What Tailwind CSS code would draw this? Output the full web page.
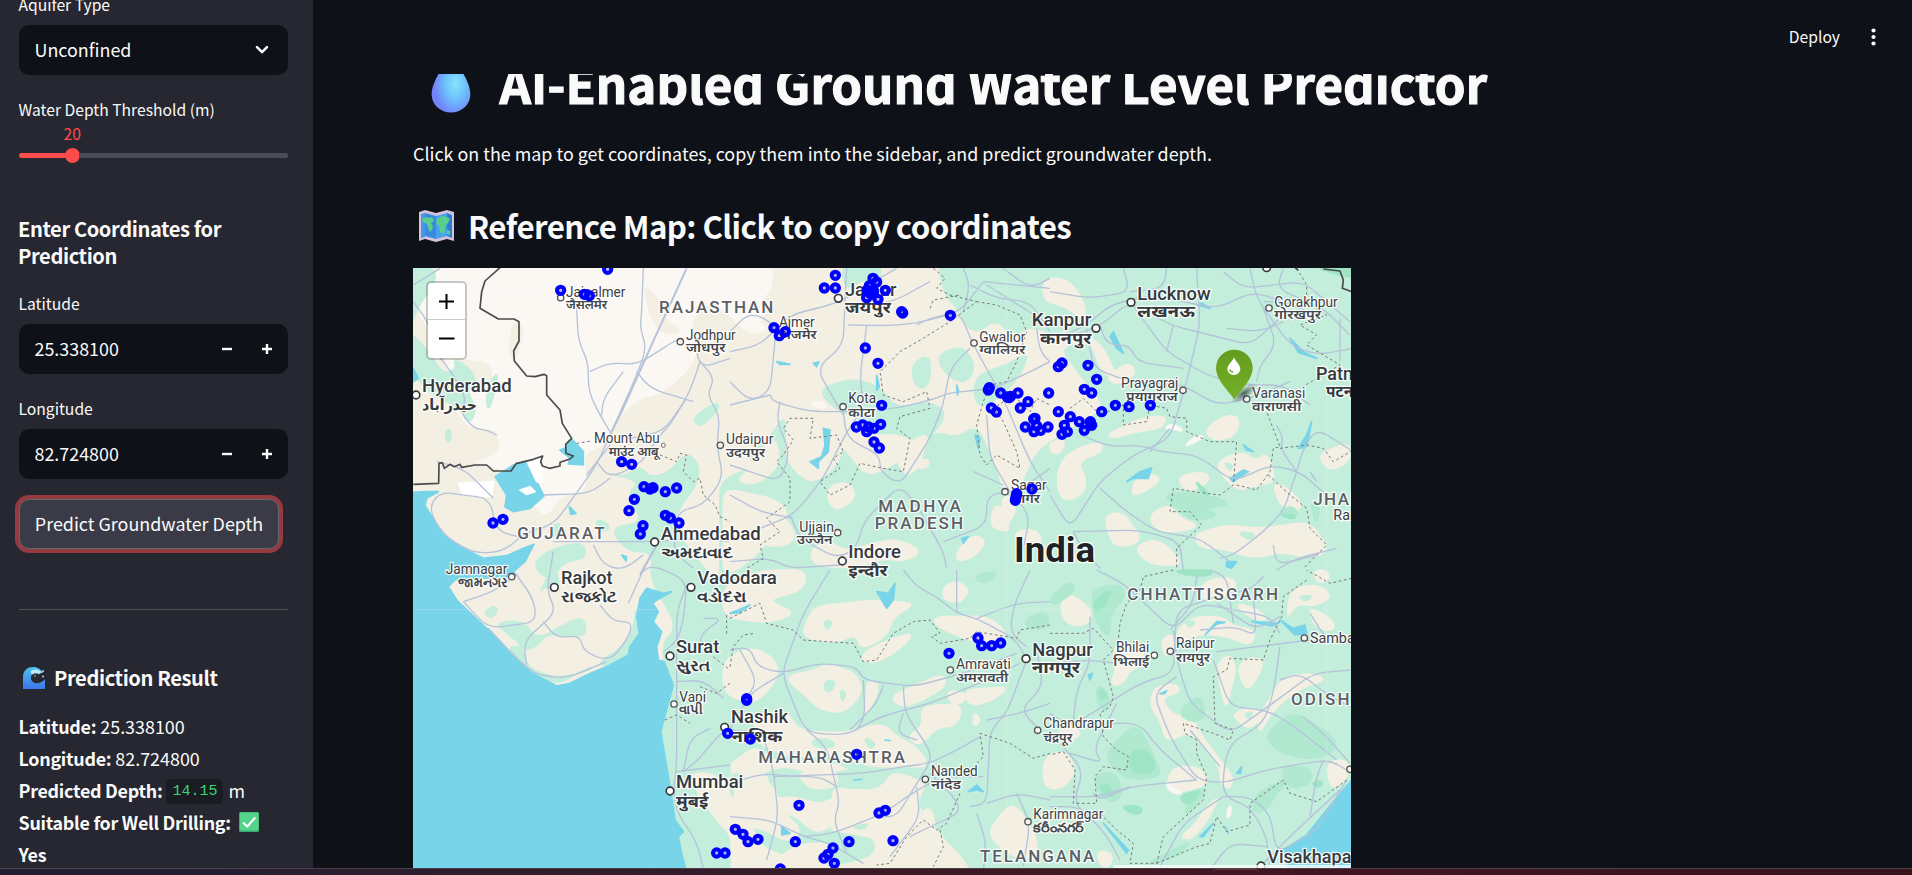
<!DOCTYPE html>
<html lang="en">
<head>
<meta charset="utf-8">
<title>AI-Enabled Ground Water Level Predictor</title>
<script src="https://cdn.jsdelivr.net/npm/@tailwindcss/browser@4"></script>
</head>
<body class="flex h-[875px] w-[1912px] flex-col overflow-hidden bg-[#0e1117] font-['Noto_Sans_CJK_SC','Source_Sans_3',sans-serif] text-[#fafafa]">
<div class="flex h-[868px] overflow-hidden">
  <aside class="h-[868px] w-[313px] shrink-0 overflow-hidden bg-[#262730] pl-[19px] pr-[25px]">
    <div class="-ml-[0.5px] h-[25px] text-[15.67px] leading-[10px] whitespace-nowrap">Aquifer Type</div>
    <div class="flex h-[50px] items-center justify-between rounded-[10px] bg-[#0e1117] pl-[15.5px] pr-[19px] text-[17.9px] leading-[30px]">
      <span class="mb-[2px]">Unconfined</span>
      <svg width="14" height="10" viewBox="0 0 14 10" fill="none" stroke="#fafafa" stroke-width="2.5" stroke-linecap="round" stroke-linejoin="round"><path d="M2 2.2 7 7.2 12 2.2"/></svg>
    </div>
    <div class="mt-[23px] -ml-[0.5px] h-6 text-[15.67px] leading-6 whitespace-nowrap">Water Depth Threshold (m)</div>
    <div class="h-[23px] pl-[44.5px] text-[15.67px] leading-[24px] text-[#ff4b4b]">20</div>
    <div class="mt-[3px] flex h-[15px] items-center">
      <div class="h-[5px] w-[48px] rounded-l-full bg-[#ff4b4b]"></div>
      <div class="-ml-[2px] size-[15px] rounded-full bg-[#ff4b4b]"></div>
      <div class="-ml-px h-[5px] flex-1 rounded-r-full bg-[#4b4c56]"></div>
    </div>
    <h3 class="mt-[52px] -ml-px h-[54px] text-[20.1px] leading-[27px] font-semibold tracking-[-0.4px]">Enter Coordinates for<br>Prediction</h3>
    <div class="mt-[23px] -ml-[0.5px] h-6 text-[15.67px] leading-6">Latitude</div>
    <div class="mt-[8px] flex h-[50px] items-center rounded-[10px] bg-[#0e1117] pl-[15.5px] pr-4 text-[17.9px] leading-[30px]">
      <span class="mb-[2px] flex-1">25.338100</span>
      <svg class="mr-[30px]" width="10" height="10" viewBox="0 0 10 10"><path d="M0 5H10" stroke="#fafafa" stroke-width="2.4"/></svg>
      <svg width="10" height="10" viewBox="0 0 10 10"><path d="M0 5H10M5 0V10" stroke="#fafafa" stroke-width="2.4"/></svg>
    </div>
    <div class="mt-[23px] -ml-[0.5px] h-6 text-[15.67px] leading-6">Longitude</div>
    <div class="mt-[8px] flex h-[50px] items-center rounded-[10px] bg-[#0e1117] pl-[15.5px] pr-4 text-[17.9px] leading-[30px]">
      <span class="mb-[2px] flex-1">82.724800</span>
      <svg class="mr-[30px]" width="10" height="10" viewBox="0 0 10 10"><path d="M0 5H10" stroke="#fafafa" stroke-width="2.4"/></svg>
      <svg width="10" height="10" viewBox="0 0 10 10"><path d="M0 5H10M5 0V10" stroke="#fafafa" stroke-width="2.4"/></svg>
    </div>
    <button class="mt-5 flex h-[50px] w-[260px] items-center justify-center rounded-[10px] border border-[#65666e] bg-[#3b3b47] pb-[2px] text-[17.9px] whitespace-nowrap ring-4 ring-[#943a40]">Predict Groundwater Depth</button>
    <div class="mt-[60px] h-px bg-[#4e4f57]"></div>
    <h3 class="mt-[54px] flex h-[27px] items-center text-[20.1px] leading-[27px] font-semibold tracking-[-0.4px] whitespace-nowrap">
      <svg class="mr-[9px] ml-1 shrink-0" width="22" height="22" viewBox="0 0 22 22">
        <defs><linearGradient id="wv" x1="0" y1="0" x2="0" y2="1"><stop offset="0" stop-color="#4fc3f0"/><stop offset="1" stop-color="#3d76ea"/></linearGradient></defs>
        <path d="M0 22V10C0 3 5 0 10 0c4 0 8 2 9 5l-2 2c-4-3-9-1-9 4 0 4 4 6 8 5 3-.7 5-2.500 6-4v10z" fill="url(#wv)"/>
        <path d="M8 4c2-2 7-2 9 0l3 1-1 1-2-.5-1 2-2-1.500-1 1-1-1-2 1.500-2-1z" fill="#b9ecf7"/><g fill="#b9ecf7"><circle cx="20" cy="4" r=".9"/><circle cx="20" cy="9.500" r=".9"/><circle cx="12" cy="9" r=".7"/></g>
      </svg>Prediction Result</h3>
    <div class="mt-[19px] -ml-[0.5px] w-[270px] text-[17.9px] leading-8 whitespace-nowrap">
      <div class="h-8"><b class="font-semibold tracking-[-0.27px]">Latitude:</b> 25.338100</div>
      <div class="h-8"><b class="font-semibold tracking-[-0.27px]">Longitude:</b> 82.724800</div>
      <div class="flex h-8 items-center"><b class="font-semibold tracking-[-0.27px]">Predicted Depth:</b><code class="mt-[2px] mr-[5px] ml-[4px] flex h-[25px] w-[57px] items-center justify-center rounded-[5px] bg-[#1a1c24] font-['Liberation_Mono',monospace] text-[15px] leading-none text-[#3dd56d]">14.15</code>m</div>
      <div class="flex h-8 items-center"><b class="font-semibold tracking-[-0.27px]">Suitable for Well Drilling:</b>
        <svg class="ml-[8px] shrink-0" width="20" height="20" viewBox="0 0 20 20"><rect width="20" height="20" rx="1.500" fill="#3da873"/><rect x="1" y=".5" width="18.500" height="18" rx="1" fill="#55d38b"/><path d="M4 10.500 8.200 14.500 16.300 5.500" fill="none" stroke="#fff" stroke-width="2"/></svg></div>
      <div class="h-8"><b class="font-semibold tracking-[-0.27px]">Yes</b></div>
    </div>
  </aside>

  <main class="flex h-[868px] flex-1 flex-col bg-[#0e1117]">
    <header class="flex h-[74px] shrink-0 items-center justify-end gap-[31px] pr-[36px] text-[15.67px]">
      <span>Deploy</span>
      <svg width="5" height="18" viewBox="0 0 5 18" fill="#fafafa"><circle cx="2.500" cy="2.500" r="2.100"/><circle cx="2.500" cy="9" r="2.100"/><circle cx="2.500" cy="15.500" r="2.100"/></svg>
    </header>
    <section class="min-h-0 flex-1 overflow-hidden pl-[100px]">
      <h1 class="-mt-[24.500px] flex h-[66px] items-center text-[49.200px] leading-[66px] font-bold whitespace-nowrap">
        <svg class="mr-[29px] ml-[17.500px] shrink-0" width="40" height="60" viewBox="0 0 40 62"><defs><radialGradient id="dr" cx=".62" cy=".5" r=".55"><stop offset="0" stop-color="#86e6ff"/><stop offset=".5" stop-color="#6dc0fb"/><stop offset="1" stop-color="#7383fb"/></radialGradient></defs><path d="M20 2C23 8 40 27 40 43a20 18.500 0 0 1-40 0C0 27 17 8 20 2z" fill="url(#dr)"/></svg>
        <span class="tracking-[0.02px] [-webkit-text-stroke:1.1px_#fafafa]">AI-Enabled Ground Water Level Predictor</span></h1>
      <p class="mt-[21.500px] h-8 text-[17.9px] leading-8 whitespace-nowrap">Click on the map to get coordinates, copy them into the sidebar, and predict groundwater depth.</p>
      <h2 class="mt-[36px] flex h-[42px] items-center text-[31.300px] leading-[42px] font-semibold tracking-[-0.6px] whitespace-nowrap">
        <svg class="mr-[14px] ml-[6px] shrink-0" width="35" height="32" viewBox="0 0 35 32"><path d="M0 2 6 0l11 3L28 0l7 2v29l-7-2-11 3-11-3-6 2z" fill="#d5c2dc"/><path d="M2 4 6 3v24l-4 1z" fill="#4698e8"/><path d="m6 3 11 3v23L6 26z" fill="#3b8ae0"/><path d="M17 6 28 3v23l-11 3z" fill="#4ba2ec"/><path d="m28 3 5 2v23l-5-2z" fill="#2e7dd4"/><path d="M3 9l4-2 3 1 3-1 2 4-3 2 2 3-1 4-2 2-2-4-1-4-4-2zM18 9l5-3 5 1 3 2-2 4-3 3 0 5-2 3-3-2-1-6-3-2zM28 20l3 1v4l-3-1z" fill="#58cf8c"/></svg>
        <span>Reference Map: Click to copy coordinates</span></h2>
      <div class="relative mt-[21px] h-[600px] w-[938px] overflow-hidden">
        <svg class="block" width="938" height="600" viewBox="413 268 938 600"><g id="map" transform="translate(410 265) scale(.333333)"></g></svg>
        <div class="absolute top-[13px] left-[13px] h-[79px] w-[41px] rounded-[5px] border-[2.500px] border-black/20 bg-white bg-clip-padding">
          <svg class="block" width="37" height="75" viewBox="0 0 37 75"><path d="M0 36.500H37" stroke="#ccc"/><path d="M11 18.500H26M18.500 11V26M11 55.500H26.500" stroke="#000" stroke-width="2"/></svg>
        </div>
      </div>
    </section>
  </main>
</div>
<footer class="flex h-[7px] justify-center border-t border-[#4b4147] bg-linear-to-r from-[#241e31] from-10% via-[#431621] via-60% to-[#38131d]"><div class="ml-[560px] h-[6px] w-[46px] rounded-t border-t border-[#653640]"></div></footer>

<script>
const G='#c3eedb',C='#f4efe3',D='#fbf8f4',W='#78d4e9',H='#9fe5c5',M='#b0e9d0';
const nums=s=>{const a=s.trim().split(/[ ,]+/).map(Number),p=[];for(let i=0;i<a.length;i+=2)p.push([a[i],a[i+1]]);return p};
const path=(s,dx=0,dy=0,close=false)=>'M'+nums(s).map(p=>(p[0]+dx)+' '+(p[1]+dy)).join('L')+(close?'Z':'');
const round=(s,dx,dy,close)=>{
  const p=nums(s).map(q=>[q[0]+dx,q[1]+dy]),n=p.length;
  const mix=(a,b)=>{const d=Math.hypot(b[0]-a[0],b[1]-a[1])||1,t=Math.min(.5,40/d);return [(a[0]+(b[0]-a[0])*t).toFixed(1),(a[1]+(b[1]-a[1])*t).toFixed(1)].join(' ')};
  let d='';
  if(close){for(let i=0;i<n;i++){const a=p[(i+n-1)%n],b=p[i],c=p[(i+1)%n];d+=(i?'L':'M')+mix(b,a)+'Q'+b.join(' ')+' '+mix(b,c)}return d+'Z'}
  d='M'+p[0].join(' ');for(let i=1;i<n-1;i++)d+='L'+mix(p[i],p[i-1])+'Q'+p[i].join(' ')+' '+mix(p[i],p[i+1]);
  return d+'L'+p[n-1].join(' ');
};
let out='<rect width="2830" height="1830" fill="'+C+'"/>';
const fill=(color,dx,dy,...shapes)=>shapes.forEach(s=>out+=`<path d="${color===W||color==='#fff'?path(s,dx,dy,true):round(s,dx,dy,true)}" fill="${color}" stroke="${color}" stroke-width="5" stroke-linejoin="round"/>`);
const line=(color,w,dx,dy,dash,...shapes)=>shapes.forEach(s=>out+=`<path d="${dash||w===5?path(s,dx,dy):round(s,dx,dy,false)}" fill="none" stroke="${color}" stroke-width="${w}" stroke-linejoin="round"${dash?' stroke-dasharray="'+dash+'"':''}/>`);

// Large land cover regions
fill(D,0,0,'80,0 1090,0 1080,50 1060,110 1020,160 1080,190 1020,210 960,150 900,110 860,140 840,190 870,250 820,330 740,390 680,400 610,480 590,540 520,560 530,680 450,690 410,760 350,700 300,640 260,600 180,590 170,490 110,400 120,300 90,250 60,190 20,140 60,80');
fill(C,0,0,'310,170 340,185 335,230 310,290 295,245 305,210','640,440 700,420 760,440 800,400 840,430 790,500 720,490 660,510 610,500','700,60 730,80 770,170 810,190 800,210 750,200 720,150','230,290 250,330 220,390 160,310 120,270 170,290','20,470 110,400 180,500 260,490 270,560 200,590 90,590 80,650 10,655');
fill(G,0,0,'0,0 80,10 70,70 30,110 0,190','0,200 50,250 100,330 140,310 130,280 180,310 200,350 170,380 200,430 180,480 140,420 80,400 0,320','105,500 120,490 125,520 112,535','240,350 265,320 255,380 235,440 228,400','590,620 640,640 690,600 720,640 780,620 830,560 870,600 860,660 800,740 790,790 850,870 900,930 960,1000 990,1100 960,1180 880,1230 800,1200 750,1170 800,1080 720,940 730,860 650,860 600,790 700,770 650,690 690,650','370,890 430,850 520,830 530,880 460,890 430,940 390,930','845,460 920,410 930,430 870,490','420,790 450,770 450,800 430,820','560,760 600,780 590,800 560,790');
fill(G,960,0,'330,0 460,0 440,60 400,40 350,80','620,-40 1000,-40 1000,220 900,180 850,220 800,160 730,210 680,130 640,80','620,270 700,240 740,310 700,360 640,320','540,300 600,265 600,360 560,375','740,330 830,300 900,260 870,330 820,390 750,430 730,390','265,375 360,340 440,360 500,430 600,410 650,440 620,500 560,530 490,500 430,510 390,460 310,430','-30,650 80,600 50,570 120,520 160,450 170,510 230,590 330,540 410,640 500,600 570,530 620,500 680,520 740,480 790,590 820,690 1000,650 1000,960 -30,960');
fill(G,1920,0,'-120,-40 960,-40 960,1780 850,1740 800,1780 740,1880 -100,1880 -100,700 -40,560 50,500 170,430 100,340 30,250 120,230 150,330 210,350 170,250 110,200 60,210 -40,150 100,100 -60,30');
fill(G,960,915,'-30,-30 1000,-30 1000,960 760,960 700,860 640,800 560,700 600,640 500,600 400,640 340,580 250,570 130,570 80,520 -30,600','0,600 60,630 160,590 260,620 360,600 500,590 440,660 350,650 280,700 170,670 90,700 0,690','60,740 180,730 260,800 340,750 420,790 440,850 350,880 240,880 150,850 90,820');
fill(G,0,915,'390,70 420,0 440,0 450,60 400,50','250,160 340,150 380,210 470,160 520,140 530,190 500,200 410,190 380,230 340,240 320,210','340,240 350,290 430,325 530,305 550,290 500,310 440,345 370,310 290,230 330,230','220,130 250,105 265,120 245,145','680,100 690,190 650,260 600,290 560,280 640,230 670,180','760,200 960,140 960,640 900,600 830,610 870,690 930,770 960,800 960,950 830,950 780,740 745,485 765,350');

// Cream farmland inside the wooded regions
fill(C,960,0,'100,540 140,520 150,600 80,660 20,650 50,620','170,460 330,490 340,570 280,640 230,650 170,590','-20,670 130,700 180,740 120,820 60,890 -20,935','490,560 600,500 560,620 520,630','300,660 360,650 380,700 320,740 290,700','20,790 130,740 180,770 200,830 120,850','560,590 590,580 600,600 570,615','790,720 820,730 815,700 845,690 860,740 830,780 840,800 780,790','700,830 740,810 770,830 730,880 670,890','240,850 300,830 350,860 410,840 500,820 580,860 520,890 460,880 360,910 250,900','850,800 920,790 940,840 870,850','620,120 680,150 650,200 560,230 600,160');
fill(C,1920,0,'-20,40 50,40 100,100 110,170 40,120 -20,110','190,320 240,290 260,330 200,360 170,340','170,510 270,460 350,450 340,490 260,500 190,520','30,590 80,550 150,530 160,560 80,590 110,640 100,690 40,710 20,660','460,500 520,450 570,455 560,510 500,530','515,580 580,560 620,590 650,560 680,650 620,660 560,680 500,610','390,630 470,620 480,650 420,680 390,660','240,700 260,630 330,630 320,660','310,740 360,720 390,760 450,780 400,800 330,800 300,770','250,850 310,820 360,850 400,900 300,900','430,810 520,780 640,790 780,770 840,860 770,880 700,860 610,880 520,850 450,850','160,750 220,740 280,830 190,850','670,650 730,680 760,730 710,740 680,700','800,570 900,530 900,590 840,620','0,530 50,520 30,570 0,560');
fill(C,960,915,'-20,50 100,0 230,0 220,60 110,90 200,130 110,160 -20,140','250,110 430,90 560,100 490,140 470,200 390,240 380,190 320,220 210,200','410,240 500,200 550,190 520,230 440,280 390,270','610,140 780,140 840,200 740,220 620,170','-20,270 60,230 130,260 150,310 100,380 60,400 -20,370','160,320 260,300 290,280 380,310 400,370 340,430 270,420 220,370','410,330 450,340 430,400 400,440 410,380','480,380 640,310 650,350 560,400 510,410','650,360 710,370 700,400 660,400','700,360 840,350 790,390 720,410','730,430 745,435 750,460 730,470','570,410 700,400 680,470 620,470 570,530 530,500 580,470','70,430 180,430 200,480 330,490 460,460 500,500 560,530 600,590 540,590 430,590 330,560 180,560 80,520','10,630 90,600 130,640 160,730 220,780 170,820 110,780 20,760','200,610 310,590 330,650 240,660','300,650 420,670 500,690 450,710 370,700 320,730','290,780 340,740 420,730 510,750 450,810 370,790','480,850 520,800 550,760 600,700 620,780 560,840','770,790 840,700 880,730 930,830 890,870 830,850','120,880 210,820 310,820 300,900 140,900','640,50 680,30 720,60 690,100 640,90');
fill(C,1920,915,'30,90 60,70 130,120 110,170 40,160','380,180 430,140 520,140 550,170 620,180 600,230 540,200 450,190 380,220','440,70 470,30 550,20 560,60 480,100','550,100 610,110 660,150 610,150','190,230 230,210 280,250 290,280 240,300 220,340 180,350 200,290','330,210 370,190 380,230 350,270','500,280 540,250 560,300 540,360 530,420 510,350','560,290 600,260 640,270 630,310 590,370','670,370 700,320 790,310 830,330 760,350 690,400 650,450 630,490 620,450','720,60 800,40 850,80 790,110 740,100 710,150','790,0 830,0 840,30 800,40','550,430 600,410 640,430 600,480 560,450','310,350 380,340 390,370 330,380 370,440 420,430 450,490 510,570 550,620 540,660 510,640 510,590 420,480 350,520 330,450 300,410','350,640 370,590 450,590 480,640 420,660 370,670','390,800 430,770 450,740 480,700 510,680 460,770 420,810','-20,560 50,540 80,610 30,660 -20,650','830,570 900,570 890,630 840,660','20,480 60,470 100,490 50,520','140,840 190,850 180,890 150,890','770,110 840,140 860,180 800,180');
// Small woods scattered over the farmland
fill(G,960,915,'280,150 310,155 290,185','290,330 320,335 300,370 280,355','330,355 350,370 335,400','130,440 160,440 150,460','240,510 300,505 320,530 260,535','400,500 440,520 420,540','110,610 150,630 130,660','360,770 420,760 400,780');
fill(G,1920,915,'400,150 440,155 420,175','580,430 610,425 600,450','740,80 790,75 770,95');
fill(G,1920,0,'380,845 420,850 410,890','560,800 620,805 600,830','520,590 550,600 540,620');

// Dense forest
fill(M,1920,915,'120,60 210,40 230,80 180,130 180,210 140,160','140,340 180,370 170,430 140,400','160,560 230,480 270,470 310,560 340,620 230,630','130,620 190,600 220,660 200,700 150,680','380,430 450,370 470,440 430,460','640,500 720,430 760,440 850,500 860,540 790,570 690,550','690,590 780,590 790,640 710,660','420,670 470,650 440,710 400,740','350,850 430,810 380,860 260,900','0,80 60,30 80,60 10,110','600,720 620,670 720,620 690,660 640,730');
fill(M,1920,0,'340,690 400,680 510,700 540,720 460,730 510,750 430,770 380,730','680,740 730,720 750,760','780,710 810,710 800,790','780,0 940,0 940,45');
fill(H,1920,915,'155,70 190,60 150,130 125,110','240,540 300,540 320,610 240,610','140,650 180,640 190,690','215,705 280,710 270,735 230,725','370,0 490,0 480,20 400,15','150,350 175,380 150,390','380,680 460,655 420,710','780,640 820,630 810,655');
fill(H,1920,0,'790,5 925,5 925,38 860,30','430,640 480,690 460,690','680,745 740,750 730,765');
fill(M,960,915,'730,20 800,0 790,30 750,40','880,150 950,120 960,170 900,180');

// Sea, gulfs and lakes
fill(W,0,0,'8,682 50,680 85,680 50,700 45,722 75,770 100,810 160,850 220,880 290,872 340,850 372,838 345,890 310,920 320,930 290,935 135,945 115,965 140,1005 240,1100 300,1165 360,1220 440,1263 480,1255 530,1230 600,1200 655,1170 660,1145 688,1105 680,1055 690,1000 710,970 760,985 785,980 740,1005 728,1015 745,1040 730,1070 755,1100 740,1145 745,1185 762,1190 790,1260 775,1315 752,1400 770,1505 785,1595 795,1665 820,1700 805,1715 815,1765 832,1830 8,1830','255,635 310,600 350,590 380,650 402,693 360,730 310,740 285,725 290,690','485,522 520,560 520,600 475,597 480,580 450,555 465,550','478,725 498,745 482,748','10,310 25,340 10,350','635,870 650,875 648,888');
fill(W,1920,1540,'910,0 910,300 725,300 700,215 770,170 850,70');
fill('#fff',0,0,'350,588 392,585 395,650 380,650','145,655 250,650 245,695 160,690','330,675 360,665 375,680 350,688');
fill(D,960,0,'-20,-20 130,10 120,80 90,100 100,170 40,190 60,100 -20,60','240,410 280,410 290,430 260,430');
fill('#faf7f2',1920,0,'340,490 370,475 405,500 370,492','400,545 440,510 465,515 430,535');
fill('#faf7f2',1920,915,'350,630 370,655 400,665 380,675 350,655','535,710 545,710 538,745 530,740');
fill(W,960,0,'280,490 300,495 295,560 265,590 265,610 240,590 275,575 285,540','250,295 267,291 260,305','140,290 180,298 150,298','735,510 750,520 745,550','440,330 448,365 440,375','680,360 686,380 682,390','695,820 715,815 700,835');
fill(W,1920,0,'230,650 270,620 305,608 295,640 250,640','540,640 580,615 595,620 550,650','455,115 480,130 440,120','190,200 220,265 200,250 180,215','745,550 770,510 785,470 770,545','720,220 760,260 800,280 745,262','530,890 560,890 545,910 530,905','580,540 610,560 590,555');
fill(W,960,915,'440,65 475,70 495,40 490,90 470,115','715,665 740,645 760,665 740,660','0,130 60,105 30,128','370,630 395,628','155,770 180,790 155,795','465,510 480,512');
fill(W,1920,915,'690,150 730,175 765,165 770,190 735,195','160,760 235,840 230,850','450,800 490,760 460,800','560,610 575,590 572,610','605,155 685,160 665,168','465,195 500,155 525,157 500,162','330,372 350,362 345,370','115,315 128,310 120,330','525,770 535,790');

// Road network
const R='#b5c3da';
line(R,4,0,0,'', '10,60 90,10','10,110 60,180 70,250 130,330 170,400 150,440 190,490 230,495 260,510','500,130 505,230 535,290 535,380 570,450 600,500','700,10 695,140 690,190 710,250 680,330 600,510 560,600 430,780 350,800 280,860 190,865 100,810 55,730 90,680 160,690 240,700 260,800 350,820','540,320 600,292 680,300 790,230 810,220','680,320 720,370 850,410','870,290 840,380 780,480 740,520 700,590 600,640 560,590','640,320 580,400 575,450','850,200 870,310 960,280','870,290 915,340 890,390 930,450 920,540 940,640 880,720 800,740 790,860 850,910','430,830 560,830 740,830 860,820 960,830','550,840 580,900 640,915 700,870','430,860 410,980 440,1040 340,1130 350,1200','320,930 370,1000 380,1070 310,1080 235,1090 160,1010','400,1070 440,1120 510,1110 520,1160 600,1190 660,1110 665,1070 610,1070 570,1020','160,1010 250,980 320,930','235,1090 330,1190 380,1230 470,1240 590,1190','700,915 655,1015','730,860 690,930 720,900 800,930 830,960 820,1070 800,1130 760,1160','830,960 800,1040 800,1190 800,1300 800,1500 790,1580 800,1640 860,1730 880,1810','800,1520 960,1500','820,1520 870,1480 900,1440 940,1400','820,1520 840,1420 900,1390','880,1060 940,1060 880,1100 870,1130','800,1250 880,1245 940,1300','530,630 600,540','250,700 160,610 80,590','400,690 540,685 600,640','660,520 760,500 830,400');
line(R,6,0,0,'','830,10 720,250 640,430 600,510','740,840 690,930');
line(R,4,960,0,'','0,260 90,240 180,150 300,120 350,100 430,50 500,10','350,10 345,100','0,200 60,140 140,180 120,380 60,410 0,350','355,180 470,182 560,175 690,140 760,50','410,180 400,260 390,330 400,430 350,500 280,640 190,750 90,790','345,100 340,240 260,310 310,400 340,450','560,180 600,160 690,140 720,220 780,330 820,400 900,590 960,680','600,50 490,110 410,120','120,390 130,410 240,440 340,440 500,430 620,400 650,385 790,370 880,330 960,290','120,390 0,420','340,440 350,520 450,570 450,620 510,660 600,520 640,420 660,310 720,250','0,600 150,650 180,560 140,470 150,410','0,690 90,740 190,760','0,890 120,880 180,910 330,900','180,750 210,820 320,880 380,850 400,770 510,660 560,720 640,860 650,910','640,830 770,780 770,690 840,680 900,750 880,850','770,450 780,580 840,680','730,620 820,660','850,690 960,610','760,50 960,70','770,60 960,180','700,10 720,60 700,140','720,60 800,100 900,110 960,200','920,190 930,260 960,290','820,10 900,70 960,40');
line(R,4,1920,0,'','220,10 240,80 120,100 0,80','240,80 340,70 350,10','60,210 140,190 240,110 360,180 480,210 600,240 690,160','240,110 350,260 470,330 580,360 700,360 780,420','0,230 110,180 180,120 300,90 500,130 610,80 700,110','440,10 450,180 410,350 360,520 250,570 150,650 60,790 0,690','110,190 130,310 240,350 400,360 500,420 600,400 720,350','600,10 620,100 720,240 800,270 910,250','520,20 580,70 760,50 900,170','700,10 680,70 820,130 900,210','640,130 680,240 630,300 620,350','640,110 700,110 800,150','150,180 170,240 240,240 260,290 400,310','370,180 350,260','90,510 180,545 270,540 330,560 440,570 550,650 660,600 750,620 840,700','150,670 230,740 320,800 450,820 540,890','740,620 700,740 640,800 550,870 510,880','740,620 760,550 800,490 910,560','70,800 270,795 390,830 400,920','70,800 90,840 150,910','860,850 740,880 680,915','670,840 680,900 800,870','680,480 700,520 690,550 740,620','300,560 360,490','780,620 800,650','870,160 870,290','530,190 630,200 700,170');
line(R,4,960,915,'','300,0 220,130 180,240 155,310 210,450 240,490 350,495 450,440 600,400 770,330 870,280','0,240 60,230 80,290 160,310 260,280 380,290 400,330 550,350 700,310 860,250','520,0 560,50 620,80 680,130 740,145 860,210 890,270','680,130 680,0','740,145 860,100 960,95','900,0 850,110 840,190 890,230','460,345 440,400 360,480','520,350 525,430 600,540 600,580 560,640 500,740 450,740','400,330 405,440 380,480','520,430 500,490 560,510','890,270 830,430 780,480 770,700 720,710','770,450 870,430 960,400','160,490 0,480','230,480 290,530 330,700 310,750 350,850','100,500 130,600 145,740 110,870','130,620 400,610 520,590 600,580 700,530 750,500','0,640 100,610 190,620 270,620 320,650','0,740 120,750 220,800 300,820 400,880','220,800 310,790 460,730 560,660 640,620 760,620','600,610 680,690 690,730 600,770 540,800','770,700 860,670 960,690','740,730 770,820 760,900','860,670 900,760 880,890','30,240 80,330 60,370','0,480 60,370 160,310','560,650 570,740 480,860','920,240 940,350 870,420 930,480');
line(R,4,1920,915,'','0,280 120,270 200,280','140,0 220,40 370,180 450,100 660,140 690,190','370,180 380,270 420,400 540,490 640,420 790,310 900,300','500,80 380,120 370,310 270,340 190,390 60,470 0,430','480,0 530,20 550,160','440,20 430,100 360,180','450,180 560,170 620,200 610,80','500,100 620,180 690,140','380,320 310,370 360,500 440,630 520,640 650,600 760,580 840,570 890,600','490,270 540,410 650,420 720,460 860,570','690,230 670,370 640,460 540,520 520,600 520,680 600,710 650,800 660,900','420,480 510,590','690,330 750,310 840,380 900,410','760,440 830,500 900,580','440,630 240,650 150,690 130,670','240,650 150,680 0,680','520,680 400,760 330,890','520,680 600,680 660,730 680,850 800,780 890,630','60,550 160,580 130,540 200,400','180,460 270,460 330,540 440,630','120,140 120,280 80,360 70,450','640,20 600,60 540,70','500,245 620,230 780,210','780,130 830,210 900,220','30,520 100,600 70,700 160,780 210,870','0,710 80,710 130,740','640,880 730,790 870,660','480,900 540,820 650,830','820,570 800,620 780,740');
out+='<path d="M10 73H2800M10 1034H2800M830 10V800M1790 10V1790M2750 300V1600" fill="none" stroke="#fff" stroke-opacity=".3" stroke-width="2"/>';

// State and national boundaries
const S='#77787a';
line(S,3,0,0,'8 8','500,535 545,528','750,570 800,590 810,565 830,570 820,620 850,650 870,640 880,690 915,720 930,755 960,770','870,1265 920,1285 960,1255','910,1175 960,1215','765,1365 800,1350 840,1375','950,1050 950,1110');
line(S,3,960,0,'8 8','610,10 645,40 620,70 660,90 700,100 740,110 660,170 580,220 510,260 450,320 460,390 520,410 590,380 600,430 510,455 500,490 540,520 520,620 460,610 390,595 360,660 300,690 270,650 330,610 310,580 340,560 320,510 240,520 250,460 180,460 160,490 190,525 160,570 140,590 180,640 180,710 110,760 150,800 90,840 100,880 50,910','600,130 610,105 690,90','740,110 800,120 870,150 890,200 860,290 830,350 780,360 760,410 740,480 750,570 770,600 800,570 870,610 860,560 820,470 790,430 850,390 900,440 920,400 960,420');
line(S,3,1920,0,'8 8','60,430 100,400 150,450 220,420 220,480 290,470 300,420 350,430 360,455 410,460 410,500 480,530 560,530 550,660 510,690 430,680 370,670 360,740 420,740 455,780 380,850 380,910','560,660 620,675 660,620 670,550 690,545 650,440','690,550 770,540 820,550 850,590 910,555','740,10 770,60 770,110 830,150 750,180 800,210 770,240 870,300 750,370','655,630 720,690 770,730 780,790 830,840 760,910');
line(S,3,960,915,'8 8','0,145 90,100 110,160 190,180 220,210 370,220 400,275 440,270 490,190 550,155 600,150 630,190 605,200 630,220 720,205 740,185 860,205 870,180 960,165','0,290 10,230 40,195 75,190','960,550 910,565 840,520 750,490 760,560 740,580','690,670 650,760 620,780 580,750 530,800 480,880 440,885','630,780 640,830 610,890');
line(S,3,1920,915,'8 8','0,190 100,190 130,175 190,240 160,270 190,380 180,410 150,430 160,500 200,540 235,560 230,600 160,590 135,620 140,700 70,700 75,600 40,545 0,555','370,0 280,20 270,60 230,100 210,160 205,210','905,25 840,40 770,0','770,30 700,80 695,140 660,210 640,270 540,265 530,300 490,320 495,460 550,480 540,510 490,490 400,460 405,490 440,510 440,550 470,620 460,690 340,800 320,880 240,880 250,820 200,780 140,720','320,880 440,830 480,820 500,740 530,785 600,765 600,700 700,630 720,670 800,695 890,630');
line('#4a4a4c',5,0,0,'','270,8 225,48 215,80 210,130 265,162 312,162 327,170 327,228 311,258 313,288 350,333 375,335 402,328 410,332 410,390 450,435 457,475 485,520 467,538 468,565 490,573 480,582 450,592 450,603 418,610 397,603 392,590 398,573 370,583 318,596 303,618 250,618 230,600 195,600 155,607 150,598 133,605 120,598 103,610 97,593 87,595 86,655 10,658','2740,12 2790,18 2800,45 2797,70 2825,80','2655,8 2665,16');

// Town rings: x y
nums('452,98 811,230 931,541 305,935 792,1317 1299,425 1692,234 1283,803 1785,680 2577,129 2319,376 2510,402 1621,1215 1546,1543 1883,1396 1854,1670 2233,1171 2281,1159 2683,1119 2820,1513').forEach(p=>out+=`<circle cx="${p[0]}" cy="${p[1]}" r="9.5" fill="#f8f6f2" stroke="#505154" stroke-width="4"/>`);
nums('18,390 734,831 433,967 843,967 780,1173 780,1578 944,1387 1285,100 1297,888 2058,190 2163,112 1848,1181 2553,1803 2570,8').forEach(p=>out+=`<circle cx="${p[0]}" cy="${p[1]}" r="11.5" fill="#fff" stroke="#38393b" stroke-width="5"/>`);
out+='<circle cx="760" cy="541" r="6" fill="#fff" stroke="#666" stroke-width="3"/>';

// Labels: kind, x, baseline, drawn length (0 = natural), text
const kinds={c:[54,500,'#36393d',0],t:[43,400,'#3c3f43',0],s:[51,500,'#5b6065',4],n:[46,700,'#36393d',0],m:[38,600,'#44474b',0],i:[106,700,'#202124',0]};
const labels=[
['t',468,95,178,'Jaisalmer'],['m',468,133,124,'जैसलमेर'],['s',747,144,343,'RAJASTHAN'],['t',828,224,149,'Jodhpur'],['m',828,260,118,'जोधपुर'],['c',36,380,269,'Hyderabad'],['n',36,435,165,'حيدرآباد'],['t',552,535,197,'Mount Abu'],['m',596,572,150,'माउंट आबू'],['s',322,822,262,'GUJARAT'],['c',752,825,300,'Ahmedabad'],['n',752,880,216,'અમદાવાદ'],['t',107,928,185,'Jamnagar'],['m',145,967,148,'જામનગર'],['c',453,957,155,'Rajkot'],['n',453,1012,170,'રાજકોટ'],['c',862,957,238,'Vadodara'],['n',862,1012,150,'વડોદરા'],['c',798,1165,130,'Surat'],['n',798,1217,102,'સુરત'],['t',808,1310,80,'Vapi'],['m',808,1348,70,'વાપી'],['c',798,1570,202,'Mumbai'],['n',798,1625,97,'मुंबई'],
['c',1305,93,154,'Jaipur'],['n',1305,145,138,'जयपुर'],['t',1107,185,107,'Ajmer'],['m',1108,222,112,'अजमेर'],['t',948,537,142,'Udaipur'],['m',948,575,117,'उदयपुर'],['t',1315,415,83,'Kota'],['m',1315,455,80,'कोटा'],['t',1708,230,138,'Gwalior'],['m',1708,267,138,'ग्वालियर'],['s',1405,740,247,'MADHYA'],['s',1394,793,265,'PRADESH'],['t',1168,800,104,'Ujjain'],['m',1160,838,108,'उज्जैन'],['c',1315,880,158,'Indore'],['n',1315,932,118,'इन्दौर'],['c',1865,183,179,'Kanpur'],['n',1890,237,154,'कानपुर'],['t',1803,675,107,'Sagar'],['m',1803,713,87,'सागर'],['i',1812,892,243,'India'],
['c',2182,104,220,'Lucknow'],['n',2182,157,172,'लखनऊ'],['t',2593,125,190,'Gorakhpur'],['m',2593,163,140,'गोरखपुर'],['t',2133,370,172,'Prayagraj'],['m',2148,408,155,'प्रयागराज'],['t',2526,400,160,'Varanasi'],['m',2526,438,148,'वाराणसी'],['c',2718,345,140,'Patna'],['n',2748,397,95,'पटना'],['s',2710,720,0,'JHARKHAND'],['t',2770,766,0,'Ranchi'],
['t',1638,1212,165,'Amravati'],['m',1638,1250,157,'अमरावती'],['c',963,1375,171,'Nashik'],['n',965,1430,152,'नाशिक'],['s',1045,1493,440,'MAHARASHTRA'],['t',1563,1533,140,'Nanded'],['m',1563,1572,90,'नांदेड'],['c',1867,1173,181,'Nagpur'],['n',1865,1225,145,'नागपूर'],['t',1900,1388,212,'Chandrapur'],['m',1900,1430,87,'चंद्रपूर'],['t',1870,1662,210,'Karimnagar'],['m',1868,1700,155,'కరీంనగర్'],['s',1710,1790,343,'TELANGANA'],
['s',2152,1005,452,'CHHATTISGARH'],['t',2118,1162,100,'Bhilai'],['m',2110,1202,108,'भिलाई'],['t',2298,1150,116,'Raipur'],['m',2298,1190,102,'रायपुर'],['t',2700,1133,0,'Sambalpur'],['s',2643,1320,216,'ODISHA'],['c',2572,1795,0,'Visakhapatnam']];
labels.forEach(([k,x,y,w,t])=>{const [s,wt,col,ls]=kinds[k];out+=`<text x="${x}" y="${y}" font-family="Roboto, 'Noto Sans', 'DejaVu Sans', sans-serif" font-size="${s}" font-weight="${wt}" fill="${col}" stroke="#fff" stroke-opacity=".85" stroke-width="8" stroke-linejoin="round" paint-order="stroke"${w?` textLength="${w}" lengthAdjust="${k=='s'?'spacing':'spacingAndGlyphs'}"`:ls?` letter-spacing="${ls}"`:''}>${t}</text>`});

// Attribution strip
out+='<rect x="2110" y="1800" width="720" height="30" fill="#fff" opacity=".75"/>';

// Well locations
const dots=(dx,dy,s)=>nums(s).forEach(p=>out+=`<circle cx="${p[0]+dx}" cy="${p[1]+dy}" r="11" fill="#00f" fill-opacity=".25" stroke="#00f" stroke-width="12"/>`);
dots(0,0,'593,13 452,76 523,88 538,92 635,590 665,598 702,665 720,672 729,668 766,680 800,669 673,703 657,737 766,751 781,759 807,774 699,782 691,807 279,763 249,774 953,1405 920,1764 945,1764');
dots(960,0,'316,31 283,69 316,69 429,40 440,51 418,62 412,75 420,85 410,98 444,103 430,80 466,76 515,140 518,144 661,151 132,188 148,212 166,200 406,249 444,295 455,421 379,486 398,480 410,500 416,486 432,490 452,478 432,531 448,549 775,375 778,368 812,384 837,398 832,396 842,394 864,384 894,410 871,429 784,429 799,441 915,460 911,462 886,486 912,500 932,496 920,482 954,486 956,384 906,672 860,686 856,706 858,696');
dots(1920,0,'25,305 36,294 114,301 140,343 103,373 125,384 25,440 61,455 43,481 88,470 121,470 125,481 103,496 36,508 52,500 155,440 196,421 237,425 301,421');
dots(960,915,'50,386 50,391 61,507 380,553 657,250 744,204 755,227 785,227 812,219 207,706 447,729 466,721 16,778 39,793 54,815 84,808 196,815 357,815 489,812 309,834 294,853 282,864 313,880 151,897');

// Selected point marker
out+='<defs><linearGradient id="pg" x1="0" y1="0" x2="0" y2="1"><stop offset="0" stop-color="#659c20"/><stop offset="1" stop-color="#75b027"/></linearGradient><radialGradient id="ps"><stop offset="0" stop-color="#000" stop-opacity=".6"/><stop offset="1" stop-color="#000" stop-opacity="0"/></radialGradient></defs><ellipse cx="2502" cy="385" rx="45" ry="17" transform="rotate(-35 2502 385)" fill="url(#ps)"/><path d="M2473 403C2462 385 2418 346 2418 309a55 55 0 0 1 110 0C2528 346 2484 385 2473 403z" fill="url(#pg)"/><path d="M2472 277C2476 290 2491 299 2491 313a19.500 17 0 0 1-39 0C2452 299 2468 290 2472 277z" fill="#fff"/><path d="M2459 313Q2461 321 2470 321" fill="none" stroke="#72ad25" stroke-width="4"/>';
document.getElementById('map').innerHTML=out;
</script>
</body>
</html>
